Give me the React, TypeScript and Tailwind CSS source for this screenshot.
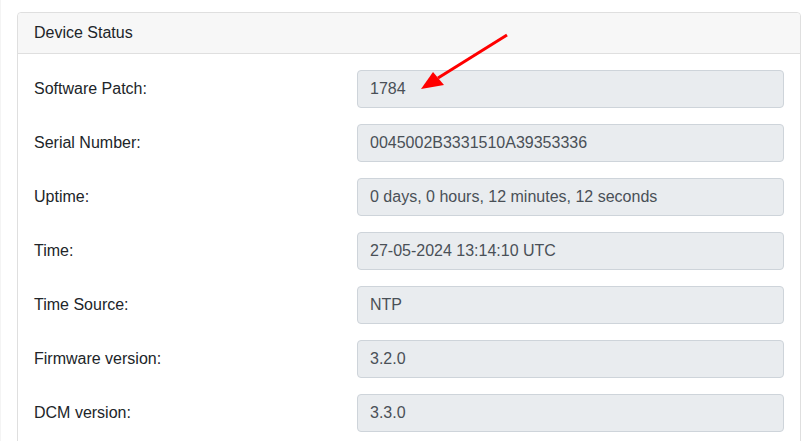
import React from "react";

const rows: [string, string][] = [
  ["Software Patch:", "1784"],
  ["Serial Number:", "0045002B3331510A39353336"],
  ["Uptime:", "0 days, 0 hours, 12 minutes, 12 seconds"],
  ["Time:", "27-05-2024 13:14:10 UTC"],
  ["Time Source:", "NTP"],
  ["Firmware version:", "3.2.0"],
  ["DCM version:", "3.3.0"],
];

export default function App() {
  return (
    <div
      className="relative w-[811px] h-[441px] overflow-hidden bg-white pl-[17px] pt-[12px] border-l border-[#f4f4f4]"
      style={{ fontFamily: '"Liberation Sans", Arial, sans-serif' }}
    >
      <div className="w-[784px] -ml-px border border-[#dfdfdf] rounded-[4px]">
        <div className="h-[41px] bg-[#f7f7f7] border-b border-[#dfdfdf] rounded-t-[4px] px-[16px] flex items-center text-[16px] text-[#212529]">
          Device Status
        </div>
        <div className="px-[16px] pt-[16px] pb-[40px] flex flex-col gap-[16px]">
          {rows.map(([label, value]) => (
            <div key={label} className="flex items-center">
              <div className="w-[323px] text-[16px] text-[#212529]">{label}</div>
              <div className="w-[427px] h-[38px] bg-[#e9ecef] border border-[#ced4da] rounded-[4px] px-[12px] flex items-center text-[16px] text-[#495057]">
                {value}
              </div>
            </div>
          ))}
        </div>
      </div>
      <svg className="absolute left-0 top-0 pointer-events-none" width="811" height="441">
        <line x1="506" y1="35" x2="437" y2="78" stroke="#ff0000" strokeWidth="3" />
        <polygon points="420,89 443,85 432,72" fill="#ff0000" />
      </svg>
    </div>
  );
}
